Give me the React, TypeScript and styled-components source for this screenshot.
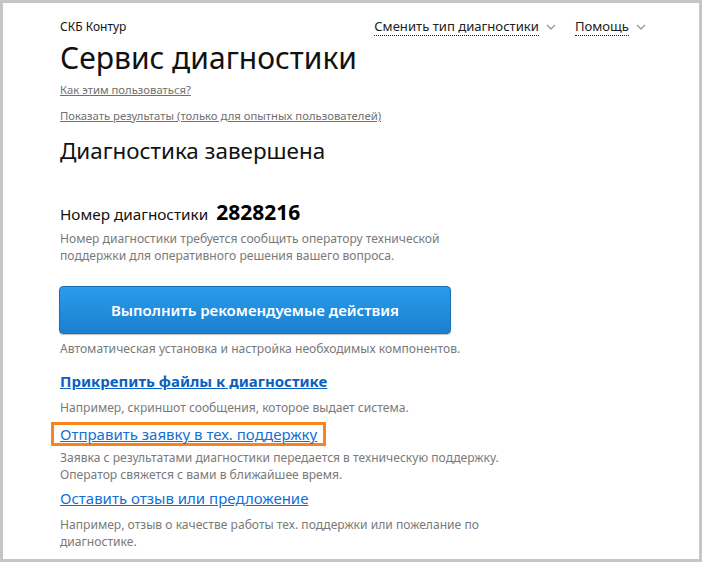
import React from "react";
import styled, { createGlobalStyle } from "styled-components";

const Global = createGlobalStyle`
  html, body { margin: 0; padding: 0; background: #fff; }
  body { font-family: "Noto Sans", "Open Sans", sans-serif; color: #111; }
`;

const Frame = styled.div`
  width: 702px;
  height: 562px;
  box-sizing: border-box;
  border: 3px solid #c6c6c6;
  background: #fff;
  overflow: hidden;
`;

const Page = styled.div`
  padding: 14px 0 0 57px;
  display: flex;
  flex-direction: column;
  align-items: flex-start;
`;

const Header = styled.div`
  display: flex;
  justify-content: space-between;
  align-items: center;
  width: 586px;
  height: 20px;
`;

const Brand = styled.div`
  font-size: 12px;
  line-height: 20px;
  color: #111;
`;

const Nav = styled.div`
  display: flex;
  gap: 19px;
  align-items: center;
`;

const NavItem = styled.div`
  display: flex;
  align-items: center;
  gap: 7px;
  font-size: 13.1px;
  line-height: 20px;
  color: #222;
`;

const Dotted = styled.span`
  border-bottom: 1px dotted #222;
  line-height: 17px;
`;

const Title = styled.h1`
  margin: 3px 0 0;
  font-size: 30px;
  font-weight: 400;
  line-height: 36px;
  color: #111;
`;

const MetaLink = styled.a<{ $mt: number }>`
  margin-top: ${(p) => p.$mt}px;
  font-size: 11.3px;
  line-height: 16px;
  color: #707070;
  text-decoration: underline;
`;

const Subtitle = styled.h2`
  margin: 13px 0 0;
  font-size: 22.4px;
  font-weight: 400;
  line-height: 28px;
  color: #111;
`;

const NumberRow = styled.div`
  margin-top: 34px;
  display: flex;
  align-items: baseline;
  gap: 8px;
  line-height: 26px;
`;

const NumberLabel = styled.span`
  font-size: 15.3px;
  color: #111;
`;

const NumberValue = styled.span`
  font-size: 21px;
  font-weight: 700;
  color: #000;
`;

const Note = styled.p<{ $mt: number }>`
  margin: ${(p) => p.$mt}px 0 0;
  font-size: 12.1px;
  line-height: 17px;
  color: #7a7a7a;
  max-width: 445px;
`;

const ActionButton = styled.button`
  margin: 22px 0 0 -1px;
  width: 392px;
  height: 48px;
  border: 1px solid #1a6fb5;
  border-radius: 4px;
  background: linear-gradient(#2a9ceb, #1b7fce);
  color: #fff;
  font-family: inherit;
  font-size: 15px;
  font-weight: 600;
  box-shadow: 0 1px 1px rgba(0, 0, 0, 0.25);
  cursor: pointer;
`;

const ActionLink = styled.a<{ $bold?: boolean; $mt: number }>`
  margin-top: ${(p) => p.$mt}px;
  font-size: 15px;
  line-height: 20px;
  font-weight: ${(p) => (p.$bold ? 700 : 400)};
  color: ${(p) => (p.$bold ? "#0b5fc1" : "#136fd6")};
  text-decoration: underline;
`;

const Highlight = styled.div`
  margin: 6px 0 0 -9px;
  border: 3px solid #f7841f;
  padding: 0 6px;
  height: 18px;
  display: flex;
  align-items: center;
`;

const Chevron = () => (
  <svg width="10" height="6" viewBox="0 0 10 6" fill="none">
    <polyline points="1,1 5,5 9,1" stroke="#9a9a9a" strokeWidth="1.3" />
  </svg>
);

export default function App() {
  return (
    <>
      <Global />
      <Frame>
        <Page>
          <Header>
            <Brand>СКБ Контур</Brand>
            <Nav>
              <NavItem>
                <Dotted>Сменить тип диагностики</Dotted>
                <Chevron />
              </NavItem>
              <NavItem>
                <Dotted>Помощь</Dotted>
                <Chevron />
              </NavItem>
            </Nav>
          </Header>
          <Title>Сервис диагностики</Title>
          <MetaLink $mt={6}>Как этим пользоваться?</MetaLink>
          <MetaLink $mt={10}>Показать результаты (только для опытных пользователей)</MetaLink>
          <Subtitle>Диагностика завершена</Subtitle>
          <NumberRow>
            <NumberLabel>Номер диагностики</NumberLabel>
            <NumberValue>2828216</NumberValue>
          </NumberRow>
          <Note $mt={3}>
            Номер диагностики требуется сообщить оператору технической поддержки для
            оперативного решения вашего вопроса.
          </Note>
          <ActionButton>Выполнить рекомендуемые действия</ActionButton>
          <Note $mt={6}>Автоматическая установка и настройка необходимых компонентов.</Note>
          <ActionLink $bold $mt={14}>Прикрепить файлы к диагностике</ActionLink>
          <Note $mt={8}>Например, скриншот сообщения, которое выдает система.</Note>
          <Highlight>
            <ActionLink $mt={0}>Отправить заявку в тех. поддержку</ActionLink>
          </Highlight>
          <Note $mt={3}>
            Заявка с результатами диагностики передается в техническую поддержку.
            <br />
            Оператор свяжется с вами в ближайшее время.
          </Note>
          <ActionLink $mt={5}>Оставить отзыв или предложение</ActionLink>
          <Note $mt={8}>
            Например, отзыв о качестве работы тех. поддержки или пожелание по
            диагностике.
          </Note>
        </Page>
      </Frame>
    </>
  );
}
